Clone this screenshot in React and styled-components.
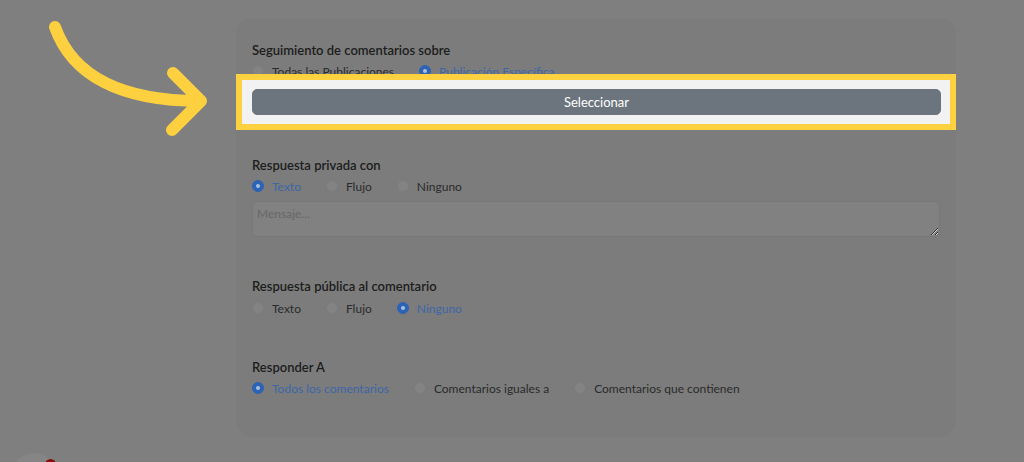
import React from 'react';
import styled, { createGlobalStyle } from 'styled-components';

const GlobalStyle = createGlobalStyle`
body {
  margin: 0;
  background: #7f7f7f;
  font-family: Lato, "Noto Sans", sans-serif;
}
`

const Page = styled.div`
position: relative;
height: 462px;
box-sizing: border-box;
padding-top: 18px;
overflow: hidden;
`

const Arrow = styled.svg`
position: absolute;
left: 0;
top: 0;
`

const Card = styled.div`
margin-left: 236px;
width: 720px;
height: 419px;
box-sizing: border-box;
padding: 22px 16px 0;
background: #7b7c7b;
border-radius: 16px;
`

const Section = styled.div`
margin-bottom: ${p => p.gap || 39}px;
`

const Title = styled.div`
font-size: 13px;
line-height: 20px;
font-weight: 600;
color: #1d1d1d;
`

const RadioRow = styled.div`
display: flex;
align-items: center;
height: 20px;
margin-top: ${p => p.top || 1}px;
`

const RadioItem = styled.label`
display: flex;
align-items: center;
gap: 8px;
margin-right: 25px;
`

const Dot = styled.span`
width: 12px;
height: 12px;
box-sizing: border-box;
border-radius: 50%;
display: flex;
align-items: center;
justify-content: center;
background: ${p => p.checked ? '#2c63b4' : '#838383'};
border: 1px solid ${p => p.checked ? '#2c63b4' : '#7d7d7d'};
&::after {
  content: '';
  width: 4px;
  height: 4px;
  border-radius: 50%;
  background: ${p => p.checked ? '#a9bfe0' : 'transparent'};
}
`

const Label = styled.span`
font-size: 12px;
color: ${p => p.checked ? '#3d66a9' : '#2b2b2b'};
`

const Spotlight = styled.div`
position: relative;
margin: -7px -16px 0;
border: 6px solid #fdd13f;
background: #f2f2f2;
padding: 9px 9px 9px 10px;
`

const SelectButton = styled.button`
display: block;
width: 100%;
height: 26px;
border: 1px solid #6c757d;
border-radius: 5px;
background: #6c757d;
color: #fff;
font-family: Lato, "Noto Sans", sans-serif;
font-size: 13px;
cursor: pointer;
`

const Message = styled.textarea`
display: block;
width: 100%;
height: 36px;
margin-top: 5px;
box-sizing: border-box;
padding: 4px 4px;
background: #818181;
border: 1px solid #787878;
border-radius: 5px;
font-family: Lato, "Noto Sans", sans-serif;
font-size: 12px;
color: #2b2b2b;
&::placeholder {
  color: #676767;
}
`

const Widget = styled.div`
position: absolute;
left: 12px;
top: 453px;
width: 44px;
height: 44px;
border-radius: 50%;
background: #858585;
`

const Badge = styled.span`
position: absolute;
left: 33px;
top: 6px;
width: 11px;
height: 11px;
border-radius: 50%;
background: #8a0c0c;
`

const Radios = ({ options, selected, top }) => (
    <RadioRow top={top}>
        {options.map(o => (
            <RadioItem key={o}>
                <Dot checked={o === selected} />
                <Label checked={o === selected}>{o}</Label>
            </RadioItem>
        ))}
    </RadioRow>
)

const App = () => {
    return (
        <Page>
            <GlobalStyle />
            <Card>
                <Section gap={25}>
                    <Title>Seguimiento de comentarios sobre</Title>
                    <Radios options={['Todas las Publicaciones', 'Publicación Específica']} selected='Publicación Específica' />
                    <Spotlight>
                        <SelectButton>Seleccionar</SelectButton>
                    </Spotlight>
                </Section>
                <Section>
                    <Title>Respuesta privada con</Title>
                    <Radios options={['Texto', 'Flujo', 'Ninguno']} selected='Texto' />
                    <Message placeholder='Mensaje...' />
                </Section>
                <Section>
                    <Title>Respuesta pública al comentario</Title>
                    <Radios options={['Texto', 'Flujo', 'Ninguno']} selected='Ninguno' top={2} />
                </Section>
                <Section>
                    <Title>Responder A</Title>
                    <Radios options={['Todos los comentarios', 'Comentarios iguales a', 'Comentarios que contienen']} selected='Todos los comentarios' top={0} />
                </Section>
            </Card>
            <Arrow width="230" height="150" viewBox="0 0 230 150">
                <path d="M55 27 C72 75 120 101 200 101" fill="none" stroke="#fdd03f" strokeWidth="12" strokeLinecap="round" />
                <path d="M173 73 L201 101 L172 130" fill="none" stroke="#fdd03f" strokeWidth="12" strokeLinecap="round" strokeLinejoin="round" />
            </Arrow>
            <Widget><Badge /></Widget>
        </Page>
    )
}

export default App
